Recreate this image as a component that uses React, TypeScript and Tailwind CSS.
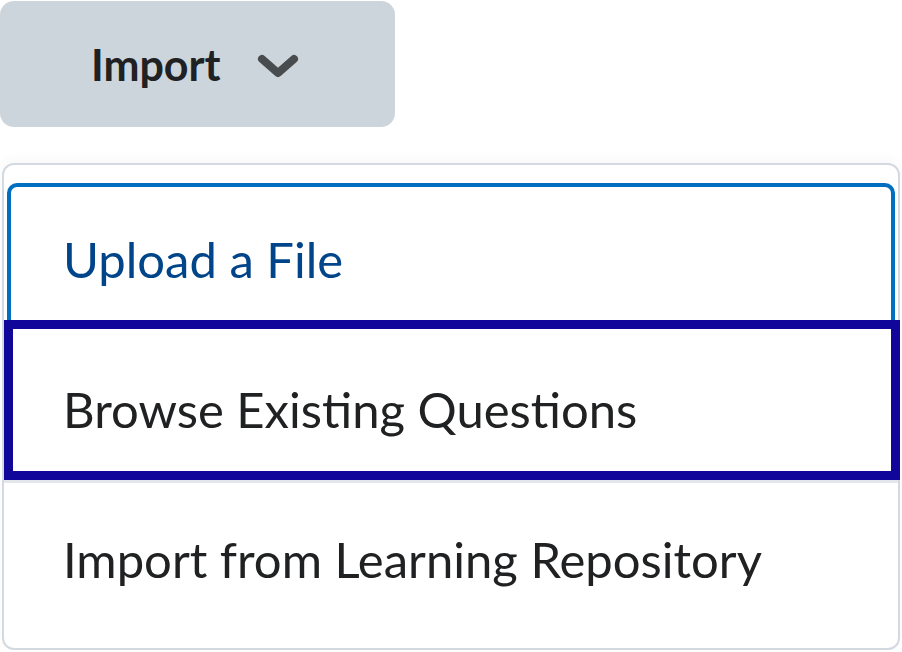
import React from 'react';

const font = { fontFamily: 'Lato, "Noto Sans", sans-serif' };

export default function App() {
    return (
        <div className="w-[902px] h-[652px] bg-white overflow-hidden" style={font}>
            {/* Import button */}
            <button className="flex items-center w-[395px] h-[126px] mt-[1px] rounded-[14px] bg-[#cdd5dc] pl-[91px] gap-[36px]">
                <span className="text-[43px] font-bold text-[#202122] leading-none">Import</span>
                <svg width="42" height="24" viewBox="0 0 42 24" className="mt-[3px]">
                    <path d="M5 5 L21 19 L37 5" fill="none" stroke="#494c4e" strokeWidth="8" strokeLinecap="round" strokeLinejoin="round" />
                </svg>
            </button>

            {/* Menu */}
            <div className="mt-[36px] ml-[2px] w-[898px] h-[487px] border-2 border-[#d3d9e0] rounded-[12px] bg-white shadow-[0_-4px_12px_rgba(0,0,0,0.03)]">
                <div className="pt-[18px] px-[3px]">
                    <div className="h-[150px] border-4 border-[#006fbf] rounded-[10px] flex items-center pl-[52px] pt-[2px]">
                        <span className="text-[49px] text-[#004489] leading-none">Upload a File</span>
                    </div>
                </div>
                <div className="-mt-[13px] -mr-[2px] h-[160px] border-[9px] border-[#11069a] flex items-center pl-[50px] pt-[18px] bg-white relative">
                    <span className="text-[49px] text-[#202122] leading-none">Browse Existing Questions</span>
                </div>
                <div className="h-[3px] bg-[#e3e7ec]" />
                <div className="h-[164px] flex items-center pl-[59px] pb-[12px]">
                    <span className="text-[49px] text-[#202122] leading-none">Import from Learning Repository</span>
                </div>
            </div>
        </div>
    );
}
